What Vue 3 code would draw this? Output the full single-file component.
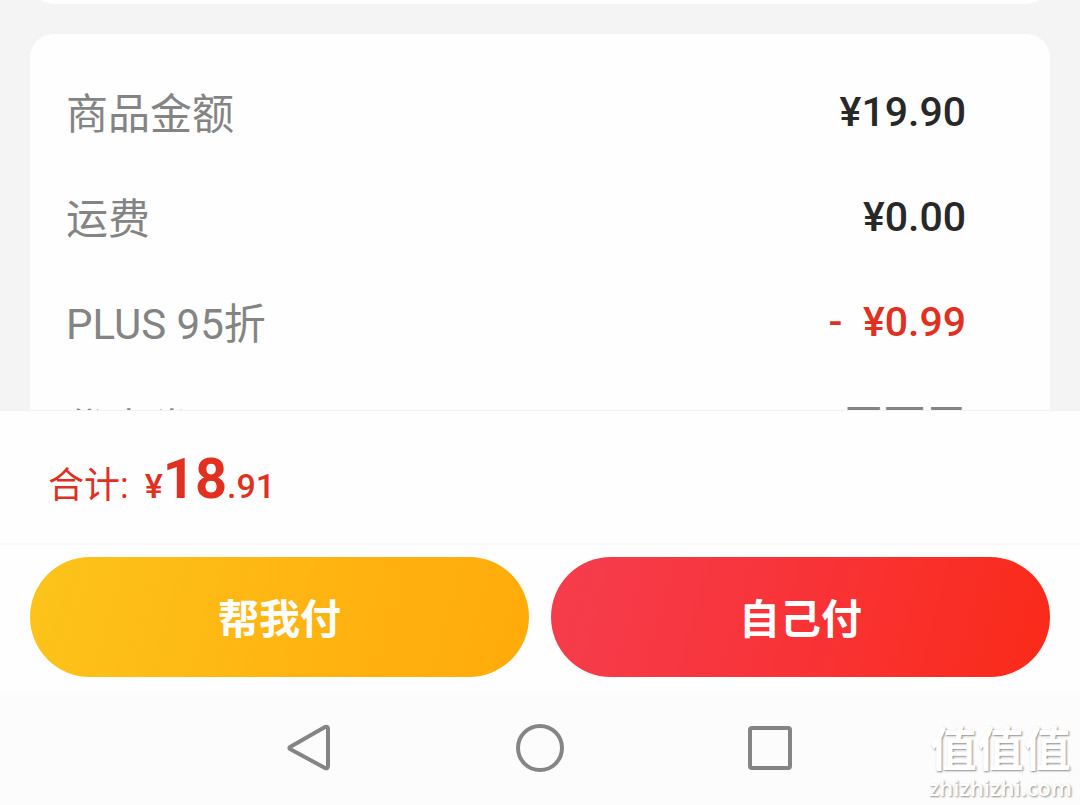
<script setup>
const rows = [
  { label: '商品金额', value: '¥19.90', tone: 'dark' },
  { label: '运费', value: '¥0.00', tone: 'dark' },
  { label: 'PLUS 95折', value: '-  ¥0.99', tone: 'red' },
  { label: '优惠券', value: '无可用', tone: 'muted' },
]
</script>

<template>
  <div class="screen">
    <main class="content">
      <section class="card previous"></section>
      <section class="card">
        <dl class="rows">
          <div v-for="row in rows" :key="row.label" class="row">
            <dt>{{ row.label }}</dt>
            <dd :class="row.tone">{{ row.value }}</dd>
          </div>
        </dl>
      </section>
    </main>

    <div class="total">
      <span class="total-label">合计:</span>
      <span class="price"><span class="yen">¥</span><strong>18</strong><span class="cents">.91</span></span>
    </div>

    <div class="actions">
      <button type="button" class="pay friend">帮我付</button>
      <button type="button" class="pay self">自己付</button>
    </div>

    <nav class="system">
      <button type="button" aria-label="返回">
        <svg width="50" height="50" viewBox="0 0 50 50"><path d="M5 24 40 4Q43 3 43 6V43Q43 46 40 45L5 26Q4 25 5 24Z" /></svg>
      </button>
      <button type="button" aria-label="主页">
        <svg width="50" height="50" viewBox="0 0 50 50"><circle cx="25" cy="25" r="22" /></svg>
      </button>
      <button type="button" aria-label="最近任务">
        <svg width="50" height="50" viewBox="0 0 50 50"><rect x="5" y="5" width="40" height="40" rx="2" /></svg>
      </button>
    </nav>

    <div class="watermark">
      <span class="mark">值值值</span>
      <span class="site">zhizhizhi.com</span>
    </div>
  </div>
</template>

<style>
body {
  margin: 0;
}
</style>

<style scoped>
.screen {
  position: relative;
  display: flex;
  flex-direction: column;
  height: 100vh;
  overflow: hidden;
  background: #fefefe;
  font-family: Roboto, "Noto Sans CJK SC", sans-serif;
}
.content {
  display: flow-root;
  flex: 1;
  min-height: 0;
  overflow: hidden;
  padding: 0 30px;
  background: #f4f4f4;
}
.card {
  margin-bottom: 30px;
  padding: 25px 84px 25px 36px;
  border-radius: 24px;
  background: #fefefe;
}
.card.previous {
  height: 48px;
  margin-top: -44px;
  padding: 0;
}
.rows {
  margin: 0;
}
.row {
  display: flex;
  align-items: center;
  justify-content: space-between;
  height: 105px;
  font-size: 42px;
  line-height: 60px;
  color: #848484;
}
dt {
  padding-top: 6px;
}
dd {
  margin: 0;
  white-space: pre;
  font-size: 41px;
  font-weight: 500;
}
.dark {
  color: #282828;
}
.red {
  color: #e1301f;
}
.muted {
  padding-bottom: 4px;
}
.total {
  display: flex;
  align-items: baseline;
  gap: 16px;
  height: 133px;
  box-sizing: border-box;
  padding: 30px 48px 0;
  border-top: 1px solid #f2f2f2;
  color: #e1301f;
  line-height: 76px;
}
.total-label {
  font-size: 36px;
}
.yen,
.cents {
  font-size: 34px;
  font-weight: 500;
}
strong {
  font-size: 56px;
  font-weight: 700;
}
.actions {
  display: flex;
  gap: 22px;
  padding: 12px 30px 15px;
  border-top: 2px solid #f8f8f8;
}
.pay {
  flex: 1;
  height: 120px;
  padding: 0 0 2px;
  border: 0;
  border-radius: 60px;
  color: #fff;
  font: 700 41px/60px "Noto Sans CJK SC", sans-serif;
}
.friend {
  background: linear-gradient(105deg, #fcc41a, #ffb412 55%, #ffab0a);
}
.self {
  background: linear-gradient(105deg, #f53d4d, #f8343a 45%, #fa2a18);
}
.system {
  display: flex;
  justify-content: center;
  gap: 180px;
  padding: 31px 0 32px;
  background: #fcfcfc;
}
.system button {
  width: 50px;
  height: 50px;
  padding: 0;
  border: 0;
  background: none;
}
.system svg {
  display: block;
  fill: none;
  stroke: #858585;
  stroke-width: 4;
  stroke-linejoin: round;
}
.watermark {
  position: absolute;
  right: 8px;
  bottom: 5px;
  display: flex;
  flex-direction: column;
  align-items: center;
  color: #fff;
  text-shadow: 1px 1px 2px #8c8c8c;
}
.mark {
  font: 700 47px/56px "Noto Sans CJK SC", sans-serif;
}
.site {
  font: 600 22px/26px "Open Sans", sans-serif;
}
</style>
